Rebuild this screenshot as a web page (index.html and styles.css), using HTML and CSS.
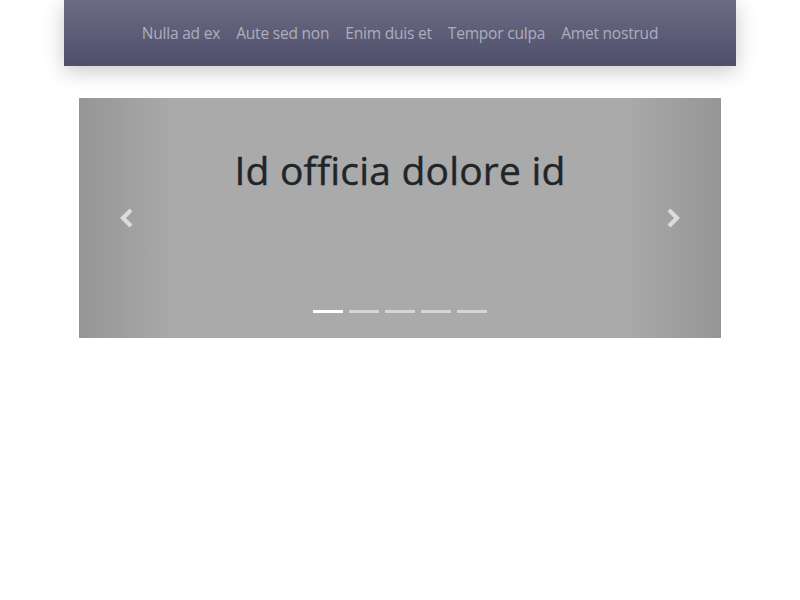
FILE: index.html
```html
<!DOCTYPE html>
<html>
<head>
<meta charset="utf-8">
<link rel="stylesheet" href="styles.css">
</head>
<body>
<div class="page">
  <nav class="navbar">
    <a class="nav-link" href="#">Nulla ad ex</a>
    <a class="nav-link" href="#">Aute sed non</a>
    <a class="nav-link" href="#">Enim duis et</a>
    <a class="nav-link" href="#">Tempor culpa</a>
    <a class="nav-link" href="#">Amet nostrud</a>
  </nav>
  <div class="carousel">
    <div class="slide">
      <h1 class="title">Id officia dolore id</h1>
    </div>
    <a class="control control-prev" href="#">
      <svg width="16" height="20" viewBox="0 0 16 20"><path d="M12 2 L4 10 L12 18" fill="none" stroke="#dcdcdc" stroke-width="4.2" stroke-linejoin="miter"/></svg>
    </a>
    <a class="control control-next" href="#">
      <svg width="16" height="20" viewBox="0 0 16 20"><path d="M4 2 L12 10 L4 18" fill="none" stroke="#dcdcdc" stroke-width="4.2" stroke-linejoin="miter"/></svg>
    </a>
    <ol class="indicators">
      <li class="ind active"></li>
      <li class="ind"></li>
      <li class="ind"></li>
      <li class="ind"></li>
      <li class="ind"></li>
    </ol>
  </div>
</div>
</body>
</html>
```
FILE: styles.css
```css
html, body {
  margin: 0;
  padding: 0;
  background: #fff;
  font-family: "Open Sans", "Noto Sans", sans-serif;
}
.page {
  width: 672px;
  margin: 0 auto;
}
.navbar {
  height: 66px;
  display: flex;
  justify-content: center;
  align-items: center;
  gap: 0;
  background: linear-gradient(to bottom, #6b6b82 0%, #4f4f6e 100%);
  box-shadow: 0 5px 20px rgba(0, 0, 0, 0.22);
}
.nav-link {
  color: rgba(255, 255, 255, 0.5);
  text-decoration: none;
  font-size: 15.5px;
  padding: 0 8px;
  letter-spacing: -0.2px;
}
.carousel {
  position: relative;
  margin: 32px 15px 0;
  height: 240px;
  background: #aaaaaa;
  overflow: hidden;
}
.slide {
  display: flex;
  justify-content: center;
  padding-top: 49px;
}
.title {
  margin: 0;
  font-size: 39px;
  font-weight: 500;
  color: #212529;
  line-height: 1.2;
  letter-spacing: 0.2px;
  -webkit-text-stroke: 0.4px #212529;
}
.control {
  position: absolute;
  top: 0;
  bottom: 0;
  width: 15%;
  display: flex;
  align-items: center;
  justify-content: center;
}
.control-prev {
  left: 0;
  background: linear-gradient(to right, rgba(0,0,0,0.12) 0%, rgba(0,0,0,0) 100%);
}
.control-next {
  right: 0;
  background: linear-gradient(to left, rgba(0,0,0,0.12) 0%, rgba(0,0,0,0) 100%);
}
.indicators {
  position: absolute;
  left: 0;
  right: 0;
  bottom: 25px;
  margin: 0;
  padding: 0;
  list-style: none;
  display: flex;
  justify-content: center;
  gap: 6px;
}
.ind {
  width: 30px;
  height: 3px;
  background: rgba(255, 255, 255, 0.5);
}
.ind.active {
  background: #fff;
}
```
